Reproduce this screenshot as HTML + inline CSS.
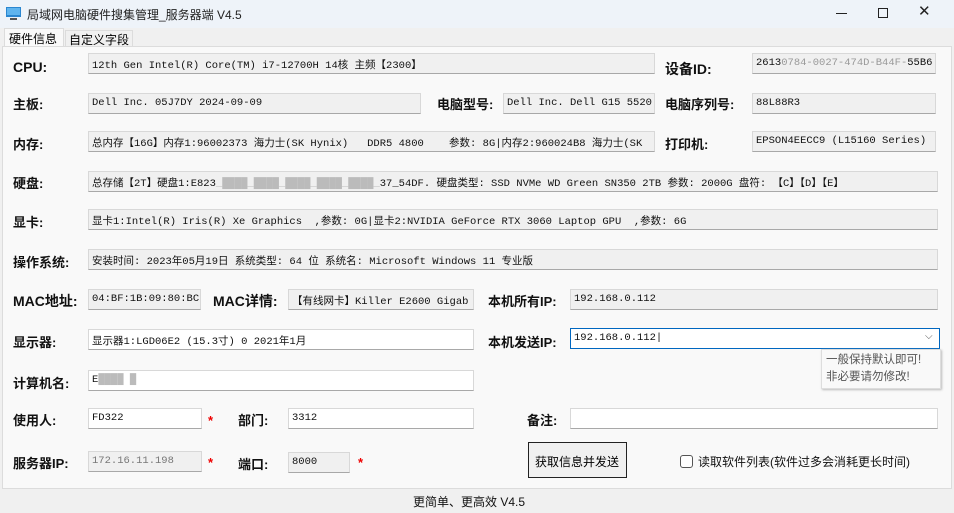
<!DOCTYPE html>
<html><head><meta charset="utf-8"><style>
*{box-sizing:border-box;margin:0;padding:0}
body{width:954px;height:513px;overflow:hidden;background:#f3f3f3;font-family:"Liberation Sans","Noto Sans CJK SC",sans-serif;position:relative}
.a{position:absolute}
.title{left:0;top:0;width:954px;height:28px;background:#eef3f9}
.tt{left:27px;top:6px;font-size:12px;color:#222}
.body{left:0;top:28px;width:954px;height:485px;background:#f0f0f0}
.panel{left:2px;top:46px;width:950px;height:443px;background:#f9f9f9;border:1px solid #dcdcdc}
.lb{font-weight:bold;font-size:13px;color:#111;white-space:nowrap;margin-top:-3px}
.f{height:21px;background:#f0f0f0;border:1px solid #d8d8d8;border-bottom:1px solid #a8a8a8;font-family:"Liberation Mono","Noto Sans CJK SC",monospace;font-size:10.5px;color:#111;padding:3px 0 0 3px;white-space:nowrap;overflow:hidden}
.w{background:#fff}
.st{color:#e00;font-size:13px;font-weight:bold}
</style></head><body>
<div class="a title"></div>
<svg class="a" style="left:6px;top:7px" width="16" height="14"><rect x="0" y="0" width="15" height="10" fill="#2a86d0"/><rect x="1" y="1" width="13" height="7" fill="#5fb4ee"/><rect x="4" y="11" width="7" height="2" fill="#555"/></svg>
<div class="a tt">局域网电脑硬件搜集管理_服务器端 V4.5</div>
<div class="a" style="left:836px;top:13px;width:11px;height:1px;background:#222"></div>
<div class="a" style="left:878px;top:8px;width:10px;height:10px;border:1px solid #222"></div>
<div class="a" style="left:918px;top:2px;font-size:15px;color:#222">✕</div>
<div class="a body"></div>
<div class="a" style="left:4px;top:28px;width:60px;height:19px;background:#f9f9f9;border:1px solid #dcdcdc;border-bottom:none;font-size:12px;padding:1px 0 0 4px">硬件信息</div>
<div class="a" style="left:65px;top:30px;width:68px;height:17px;background:#f0f0f0;border:1px solid #dcdcdc;border-bottom:none;font-size:12px;padding:0 0 0 3px">自定义字段</div>
<div class="a panel"></div>

<div class="a lb" style="left:13px;top:62px;font-size:14px">CPU:</div>
<div class="a f" style="left:88px;top:53px;width:567px">12th Gen Intel(R) Core(TM) i7-12700H 14核 主频【2300】</div>
<div class="a lb" style="left:665px;top:62px;font-size:14px">设备ID:</div>
<div class="a f" style="left:752px;top:53px;width:184px">2613<span style="color:#999">0784-0027-474D-B44F-</span>55B6</div>

<div class="a lb" style="left:13px;top:97px">主板:</div>
<div class="a f" style="left:88px;top:93px;width:333px">Dell Inc. 05J7DY 2024-09-09</div>
<div class="a lb" style="left:437px;top:97px">电脑型号:</div>
<div class="a f" style="left:503px;top:93px;width:152px">Dell Inc. Dell G15 5520</div>
<div class="a lb" style="left:665px;top:97px">电脑序列号:</div>
<div class="a f" style="left:752px;top:93px;width:184px">88L88R3</div>

<div class="a lb" style="left:13px;top:137px">内存:</div>
<div class="a f" style="left:88px;top:131px;width:567px">总内存【16G】内存1:96002373 海力士(SK Hynix)&nbsp;&nbsp; DDR5 4800&nbsp;&nbsp;&nbsp; 参数: 8G|内存2:960024B8 海力士(SK</div>
<div class="a lb" style="left:665px;top:137px">打印机:</div>
<div class="a f" style="left:752px;top:131px;width:184px">EPSON4EECC9 (L15160 Series)</div>

<div class="a lb" style="left:13px;top:176px">硬盘:</div>
<div class="a f" style="left:88px;top:171px;width:850px">总存储【2T】硬盘1:E823<span style="color:#bbb">_████_████_████_████_████_</span>37_54DF. 硬盘类型: SSD NVMe WD Green SN350 2TB 参数: 2000G 盘符: 【C】【D】【E】</div>

<div class="a lb" style="left:13px;top:215px">显卡:</div>
<div class="a f" style="left:88px;top:209px;width:850px">显卡1:Intel(R) Iris(R) Xe Graphics&nbsp; ,参数: 0G|显卡2:NVIDIA GeForce RTX 3060 Laptop GPU&nbsp; ,参数: 6G</div>

<div class="a lb" style="left:13px;top:255px">操作系统:</div>
<div class="a f" style="left:88px;top:249px;width:850px">安装时间: 2023年05月19日 系统类型: 64 位 系统名: Microsoft Windows 11 专业版</div>

<div class="a lb" style="left:13px;top:294px;font-size:14px">MAC地址:</div>
<div class="a f" style="left:88px;top:289px;width:113px">04:BF:1B:09:80:BC</div>
<div class="a lb" style="left:213px;top:294px;font-size:14px">MAC详情:</div>
<div class="a f" style="left:288px;top:289px;width:186px">【有线网卡】Killer E2600 Gigab</div>
<div class="a lb" style="left:488px;top:294px">本机所有IP:</div>
<div class="a f" style="left:570px;top:289px;width:368px">192.168.0.112</div>

<div class="a lb" style="left:13px;top:335px">显示器:</div>
<div class="a f w" style="left:88px;top:329px;width:386px">显示器1:LGD06E2 (15.3寸) 0 2021年1月</div>
<div class="a lb" style="left:488px;top:335px">本机发送IP:</div>
<div class="a f w" style="left:570px;top:328px;width:370px;border:1px solid #0067c0">192.168.0.112|</div>
<div class="a" style="left:925px;top:331px;font-size:10px;color:#555">⌵</div>
<div class="a" style="left:821px;top:349px;width:120px;height:40px;background:#f9f9f9;border:1px solid #ddd;box-shadow:1px 1px 2px #bbb;font-size:11.5px;color:#555;padding:2px 0 0 4px;line-height:17px">一般保持默认即可!<br>非必要请勿修改!</div>

<div class="a lb" style="left:13px;top:376px">计算机名:</div>
<div class="a f w" style="left:88px;top:370px;width:386px">E<span style="color:#bbb">████ █</span></div>

<div class="a lb" style="left:13px;top:413px">使用人:</div>
<div class="a f w" style="left:88px;top:408px;width:114px">FD322</div>
<div class="a st" style="left:208px;top:413px">*</div>
<div class="a lb" style="left:238px;top:413px">部门:</div>
<div class="a f w" style="left:288px;top:408px;width:186px">3312</div>
<div class="a lb" style="left:527px;top:413px">备注:</div>
<div class="a f w" style="left:570px;top:408px;width:368px"></div>

<div class="a lb" style="left:13px;top:456px">服务器IP:</div>
<div class="a f" style="left:88px;top:451px;width:114px;color:#777">172.16.11.198</div>
<div class="a st" style="left:208px;top:455px">*</div>
<div class="a lb" style="left:238px;top:457px">端口:</div>
<div class="a f" style="left:288px;top:452px;width:62px">8000</div>
<div class="a st" style="left:358px;top:455px">*</div>
<div class="a" style="left:528px;top:442px;width:99px;height:36px;border:1px solid #222;background:#f0f0f0;font-size:12px;padding:10px 0 0 6px">获取信息并发送</div>
<div class="a" style="left:680px;top:455px;width:13px;height:13px;border:1px solid #555;border-radius:3px;background:#fff"></div>
<div class="a" style="left:698px;top:453px;font-size:12px;color:#111">读取软件列表(软件过多会消耗更长时间)</div>

<div class="a" style="left:413px;top:493px;font-size:12px;color:#111">更简单、更高效 V4.5</div>
</body></html>
